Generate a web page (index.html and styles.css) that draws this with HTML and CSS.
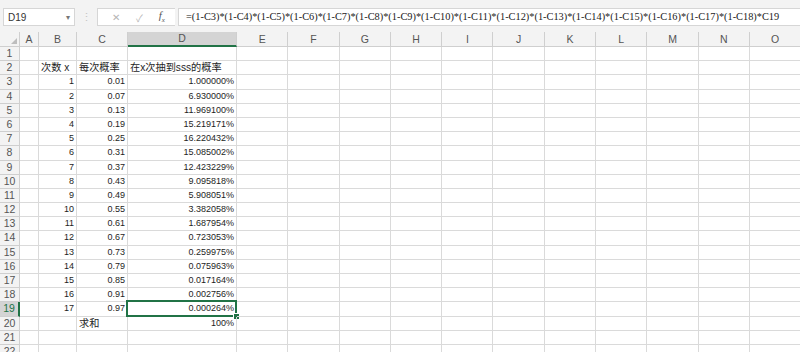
FILE: index.html
```html
<!DOCTYPE html>
<html>
<head>
    <title>Book1 - Excel</title>
    <meta charset="utf-8">
    <link rel="stylesheet" href="styles.css">
</head>
<body>
    <div class="formula-bar">
        <div class="name-box">
            <span>D19</span>
            <span class="caret">▾</span>
        </div>
        <div class="grip">⋮</div>
        <div class="fx-buttons">
            <span class="btn-cancel">✕</span>
            <span class="btn-ok">✓</span>
            <span class="btn-fx">f<sub>x</sub></span>
        </div>
        <div class="formula-input">=(1-C3)*(1-C4)*(1-C5)*(1-C6)*(1-C7)*(1-C8)*(1-C9)*(1-C10)*(1-C11)*(1-C12)*(1-C13)*(1-C14)*(1-C15)*(1-C16)*(1-C17)*(1-C18)*C19</div>
    </div>

    <div class="sheet" id="sheet">
        <div class="row head-row" id="headRow"></div>
    </div>

    <script>
        const cols = ['A', 'B', 'C', 'D', 'E', 'F', 'G', 'H', 'I', 'J', 'K', 'L', 'M', 'N', 'O'];
        const probs = ['1.000000%', '6.930000%', '11.969100%', '15.219171%', '16.220432%',
            '15.085002%', '12.423229%', '9.095818%', '5.908051%', '3.382058%', '1.687954%',
            '0.723053%', '0.259975%', '0.075963%', '0.017164%', '0.002756%', '0.000264%'];

        // cell contents by row number: [col, text, align]
        const data = {
            2: [['B', '次数 x', 'left'], ['C', '每次概率', 'left'], ['D', '在x次抽到sss的概率', 'left']],
            20: [['C', '求和', 'left'], ['D', '100%', 'right']]
        };
        probs.forEach((p, i) => {
            data[i + 3] = [
                ['B', String(i + 1), 'right'],
                ['C', (0.01 + 0.06 * i).toFixed(2), 'right'],
                ['D', p, 'right']
            ];
        });

        const headRow = document.getElementById('headRow');
        const corner = document.createElement('div');
        corner.className = 'cell corner';
        headRow.appendChild(corner);
        cols.forEach(c => {
            const h = document.createElement('div');
            h.className = 'cell col-head' + (c === 'D' ? ' active' : '');
            h.textContent = c;
            headRow.appendChild(h);
        });

        const sheet = document.getElementById('sheet');
        for (let r = 1; r <= 22; r++) {
            const row = document.createElement('div');
            row.className = 'row';
            const rh = document.createElement('div');
            rh.className = 'cell row-head' + (r === 19 ? ' active' : '');
            rh.textContent = r;
            row.appendChild(rh);
            cols.forEach(c => {
                const cell = document.createElement('div');
                cell.className = 'cell';
                const item = (data[r] || []).find(d => d[0] === c);
                if (item) {
                    cell.textContent = item[1];
                    cell.classList.add(item[2]);
                }
                if (r === 19 && c === 'D') cell.classList.add('selected');
                row.appendChild(cell);
            });
            sheet.appendChild(row);
        }
    </script>
</body>
</html>
```

FILE: styles.css
```css
:root {
    --bar-bg: #f3f3f3;
    --grid-line: #dadada;
    --head-line: #cfcfcf;
    --head-text: #555555;
    --active-head: #d4d4d4;
    --excel-green: #217346;
    --cell-text: #1e1e1e;
}

* {
    box-sizing: border-box;
    margin: 0;
    padding: 0;
}

body {
    width: 800px;
    height: 352px;
    overflow: hidden;
    background: #ffffff;
    font-family: 'Liberation Sans', 'Noto Sans CJK SC', sans-serif;
    color: var(--cell-text);
}

/* formula bar */
.formula-bar {
    height: 32px;
    background: var(--bar-bg);
    display: flex;
    align-items: flex-start;
    padding: 8px 0 0 3px;
}

.name-box {
    width: 72px;
    height: 18px;
    background: #ffffff;
    border: 1px solid #d6d6d6;
    display: flex;
    align-items: center;
    justify-content: space-between;
    padding: 0 4px 0 4px;
    font-size: 10px;
    color: #333333;
}

.caret {
    font-size: 8px;
    color: #777777;
}

.grip {
    width: 22px;
    text-align: center;
    color: #c4c4c4;
    font-size: 11px;
    line-height: 18px;
}

.fx-buttons {
    width: 78px;
    height: 18px;
    background: #ffffff;
    border: 1px solid #d6d6d6;
    border-right: none;
    display: flex;
    align-items: center;
    justify-content: space-around;
    padding: 0 2px 0 6px;
    color: #b5b5b5;
    font-size: 10px;
}

.btn-fx {
    color: #555555;
    font-family: 'Liberation Serif', serif;
    font-style: italic;
    font-size: 11px;
}

.btn-fx sub {
    font-size: 7px;
}

.formula-input {
    flex: 1;
    height: 18px;
    margin-left: 3px;
    background: #ffffff;
    border: 1px solid #d6d6d6;
    border-right: none;
    padding-left: 7px;
    font-family: 'Liberation Serif', serif;
    font-size: 10.35px;
    line-height: 16px;
    color: #222222;
    white-space: nowrap;
    overflow: hidden;
}

/* grid */
.sheet {
    display: flex;
    flex-direction: column;
}

.row {
    display: grid;
    grid-template-columns: 20px 19px 38px 51px 109px repeat(11, 51.3px);
    height: 14.2px;
}

.head-row {
    height: 15px;
    background: var(--bar-bg);
}

.cell {
    position: relative;
    border-right: 1px solid var(--grid-line);
    border-bottom: 1px solid var(--grid-line);
    font-size: 9px;
    line-height: 13px;
    padding: 0 2px;
    white-space: nowrap;
}

.cell.right {
    text-align: right;
}

.cell.left {
    text-align: left;
    overflow: visible;
    font-size: 10.2px;
}

.col-head,
.row-head,
.corner {
    background: var(--bar-bg);
    color: var(--head-text);
    text-align: center;
    font-size: 10.5px;
    border-color: var(--head-line);
}

.col-head {
    line-height: 14px;
}

.row-head {
    padding: 0;
}

.corner::after {
    content: '';
    position: absolute;
    right: 2px;
    bottom: 2px;
    border-left: 6px solid transparent;
    border-bottom: 6px solid #bdbdbd;
}

.col-head.active {
    background: var(--active-head);
    border-bottom: 2px solid var(--excel-green);
    line-height: 13px;
}

.row-head.active {
    background: var(--active-head);
    border-right: 2px solid var(--excel-green);
    color: var(--excel-green);
}

.cell.selected::before {
    content: '';
    position: absolute;
    left: -2px;
    top: -2px;
    right: -1px;
    bottom: -1px;
    border: 2px solid var(--excel-green);
}

.cell.selected::after {
    content: '';
    position: absolute;
    right: -4px;
    bottom: -4px;
    width: 5px;
    height: 5px;
    background: var(--excel-green);
    border: 1px solid #ffffff;
}
```
